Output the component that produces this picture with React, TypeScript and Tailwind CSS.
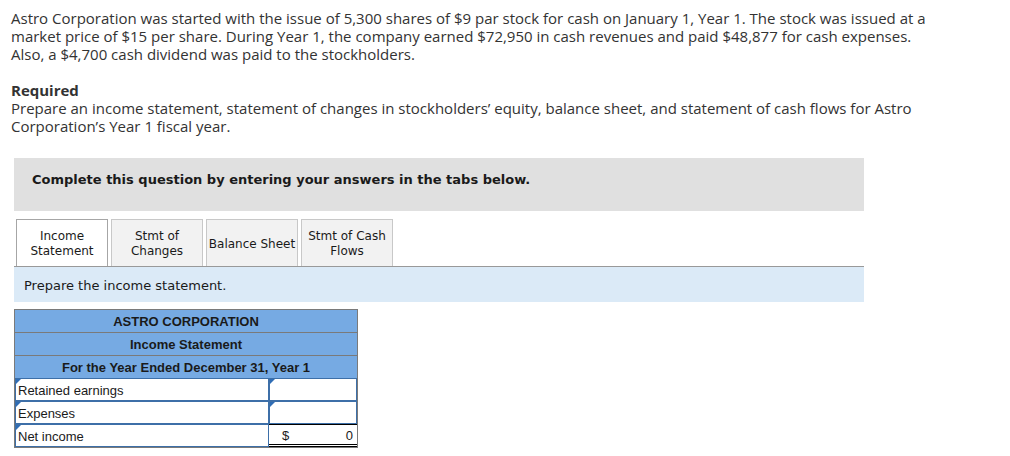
import React from 'react';

const tabs = [
  { label: ['Income', 'Statement'], active: true },
  { label: ['Stmt of', 'Changes'], active: false },
  { label: ['Balance Sheet'], active: false },
  { label: ['Stmt of Cash', 'Flows'], active: false },
];

// little blue dropdown flag in the corner of an answer cell
const Marker: React.FC = () => (
  <span className="absolute left-0 top-0 h-0 w-0 border-t-[5px] border-r-[5px] border-t-[#2f6db5] border-r-transparent" />
);

export default function App() {
  return (
    <div className="w-[1010px] h-[456px] overflow-hidden bg-white">
      <div className="pt-[9px] pl-[11px] w-[937px] text-[15px] leading-[18px] text-[#333] font-['Open_Sans',sans-serif]">
        <p>
          Astro Corporation was started with the issue of 5,300 shares of $9 par stock for cash on January 1, Year 1. The stock was issued at a market price of $15 per share. During Year 1, the company earned $72,950 in cash revenues and paid $48,877 for cash expenses. Also, a $4,700 cash dividend was paid to the stockholders.
        </p>
        <p className="mt-[18px] font-bold">Required</p>
        <p>
          Prepare an income statement, statement of changes in stockholders’ equity, balance sheet, and statement of cash flows for Astro Corporation’s Year 1 fiscal year.
        </p>
      </div>

      <div className="ml-[14px] w-[850px] mt-[23px] font-['DejaVu_Sans',Verdana,sans-serif] text-[#1a1a1a]">
        <div className="h-[53px] bg-[#e0e0e0] pt-[14px] pl-[18px] text-[13px] leading-[16px] font-bold">
          Complete this question by entering your answers in the tabs below.
        </div>

        <div className="mt-[8px] flex gap-[3px] pl-[2px] border-b border-[#999]">
          {tabs.map((t, i) => (
            <div
              key={i}
              className={
                t.active
                  ? 'w-[92px] h-[47px] -mb-px pt-[2px] bg-white border border-b-0 border-[#a6a6a6] flex flex-col items-center justify-center text-[12px] leading-[15px]'
                  : 'w-[92px] h-[47px] pt-[2px] bg-[#f2f2f2] border border-b-0 border-[#c8c8c8] flex flex-col items-center justify-center text-[12px] leading-[15px]'
              }
            >
              {t.label.map((l) => (
                <span key={l}>{l}</span>
              ))}
            </div>
          ))}
        </div>

        <div className="h-[35px] bg-[#dbeaf7] flex items-center pl-[10px] pt-[2px] text-[13px]">
          Prepare the income statement.
        </div>

        <div className="mt-[7px] w-[344px] border border-[#7a7a7a] font-['Liberation_Sans',Arial,sans-serif] text-[13px] text-[#1a1a1a]">
          <div className="bg-[#76aae3] font-bold">
            <div className="h-[23px] pt-[2px] flex items-center justify-center border-b border-[#7a7a7a]">ASTRO CORPORATION</div>
            <div className="h-[23px] pt-[2px] flex items-center justify-center border-b border-[#7a7a7a]">Income Statement</div>
            <div className="h-[22px] pt-[2px] flex items-center justify-center">For the Year Ended December 31, Year 1</div>
          </div>
          {['Retained earnings', 'Expenses'].map((r) => (
            <div key={r} className="flex">
              <div className="relative w-[254px] h-[23px] pt-[2px] bg-white border border-[#3d6fa8] flex items-center pl-[2px]">
                <Marker />
                {r}
              </div>
              <div className="relative flex-1 h-[23px] bg-white border border-[#3d6fa8]">
                <Marker />
              </div>
            </div>
          ))}
          <div className="flex">
            <div className="relative w-[254px] h-[23px] pt-[2px] bg-white border border-[#3d6fa8] flex items-center pl-[2px]">
              <Marker />
              Net income
            </div>
            <div className="flex-1 h-[23px] pt-[2px] bg-white border-t border-b-[3px] border-double border-black flex items-center justify-between pl-[13px] pr-[4px]">
              <span>$</span>
              <span>0</span>
            </div>
          </div>
        </div>
      </div>
    </div>
  );
}
